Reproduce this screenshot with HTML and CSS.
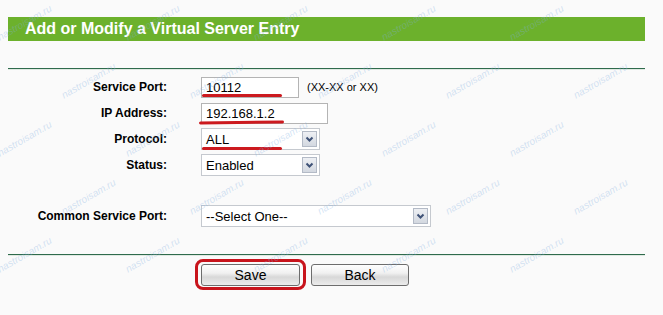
FILE: index.html
```html
<!DOCTYPE html>
<html lang="en">
<head>
    <meta charset="UTF-8">
    <meta name="viewport" content="width=device-width, initial-scale=1.0">
    <title>Virtual Server Entry</title>
    <link rel="stylesheet" href="styles.css">
</head>
<body>
    <div class="page">
        <div class="frame">
            <div class="title">Add or Modify a Virtual Server Entry</div>
            <div class="rule"></div>

            <div class="form">
                <div class="row">
                    <label class="label">Service Port:</label>
                    <input class="text port" type="text" value="10112">
                    <span class="hint">(XX-XX or XX)</span>
                </div>
                <div class="row">
                    <label class="label">IP Address:</label>
                    <input class="text ip" type="text" value="192.168.1.2">
                </div>
                <div class="row">
                    <label class="label">Protocol:</label>
                    <div class="select small">
                        <span class="value">ALL</span>
                        <span class="arrow"><svg width="13" height="14" viewBox="0 0 13 14"><path d="M3.5 5.5 L6.5 8.5 L9.5 5.5" fill="none" stroke="#3f5277" stroke-width="2"/></svg></span>
                    </div>
                </div>
                <div class="row">
                    <label class="label">Status:</label>
                    <div class="select small">
                        <span class="value">Enabled</span>
                        <span class="arrow"><svg width="13" height="14" viewBox="0 0 13 14"><path d="M3.5 5.5 L6.5 8.5 L9.5 5.5" fill="none" stroke="#3f5277" stroke-width="2"/></svg></span>
                    </div>
                </div>
                <div class="row common">
                    <label class="label">Common Service Port:</label>
                    <div class="select wide">
                        <span class="value">--Select One--</span>
                        <span class="arrow"><svg width="13" height="14" viewBox="0 0 13 14"><path d="M3.5 5.5 L6.5 8.5 L9.5 5.5" fill="none" stroke="#3f5277" stroke-width="2"/></svg></span>
                    </div>
                </div>
            </div>

            <div class="rule bottom"></div>
            <div class="buttons">
                <button class="btn">Save</button>
                <button class="btn back">Back</button>
            </div>
        </div>

        <!-- red marks drawn over the screenshot -->
        <span class="mark m1"></span>
        <span class="mark m2"></span>
        <span class="mark m3"></span>
        <span class="ring"></span>

        <div class="watermarks" id="watermarks"></div>
    </div>

    <script>
        // watermark grid
        const wm = document.getElementById('watermarks');
        for (let i = 0; i < 25; i++) {
            const s = document.createElement('span');
            s.textContent = 'nastroisam.ru';
            wm.appendChild(s);
        }
    </script>
</body>
</html>
```

FILE: styles.css
```css
body {
    margin: 0;
    padding: 0;
    background-color: #fafafa;
    font-family: 'Liberation Sans', Arial, sans-serif;
    color: #000;
}
.page {
    position: relative;
    width: 663px;
    height: 315px;
    overflow: hidden;
}
.frame {
    margin-left: 8px;
    padding-top: 17px;
    width: 637px;
}
.title {
    height: 24px;
    line-height: 24px;
    padding-left: 17px;
    background-color: #6cb12c;
    color: #fff;
    font-size: 16px;
    font-weight: bold;
}
.rule {
    margin-top: 27px;
    height: 1px;
    background-color: #2f6b4c;
    border-bottom: 1px solid #dfe9e2;
}
.rule.bottom {
    margin-top: 27px;
}
.form {
    margin-top: 4px;
}
.row {
    display: flex;
    align-items: center;
    height: 26px;
}
.row.common {
    margin-top: 27px;
    height: 22px;
}
.label {
    width: 159px;
    margin-right: 34px;
    text-align: right;
    font-size: 12px;
    font-weight: bold;
}
.text {
    box-sizing: border-box;
    height: 21px;
    margin: 0;
    padding: 0 4px;
    border: 1px solid #b4b4b4;
    background-color: #fff;
    font-family: 'Liberation Sans', Arial, sans-serif;
    font-size: 13px;
    color: #000;
    outline: none;
}
.text.port {
    width: 98px;
}
.text.ip {
    width: 127px;
}
.hint {
    margin-left: 8px;
    font-size: 11px;
}
.select {
    box-sizing: border-box;
    display: flex;
    align-items: center;
    height: 22px;
    border: 1px solid #c5c9cf;
    background-color: #fff;
    font-size: 13px;
}
.select.small {
    width: 119px;
}
.select.wide {
    width: 230px;
}
.select .value {
    flex: 1;
    padding-left: 4px;
}
.select .arrow {
    box-sizing: border-box;
    display: flex;
    width: 15px;
    height: 16px;
    margin-right: 2px;
    border: 1px solid #b3bac6;
    background: linear-gradient(#eef0f4, #d3d8e0);
}
.buttons {
    display: flex;
    gap: 11px;
    margin-top: 8px;
    padding-left: 193px;
}
.btn {
    box-sizing: border-box;
    width: 99px;
    height: 22px;
    padding: 0;
    border: 1px solid #6d6d6d;
    border-radius: 3px;
    background: linear-gradient(#fefefe, #f1f1f1 40%, #d8d8d8 60%, #ececec);
    font-family: 'Liberation Sans', Arial, sans-serif;
    font-size: 14px;
    color: #000;
}
.btn.back {
    width: 98px;
}
.mark {
    position: absolute;
    height: 3px;
    border-radius: 2px;
    background-color: #cc1a1f;
}
.m1 {
    left: 202px;
    top: 94px;
    width: 80px;
}
.m2 {
    left: 199px;
    top: 121px;
    width: 85px;
    transform: rotate(-0.6deg);
}
.m3 {
    left: 202px;
    top: 147px;
    width: 80px;
}
.ring {
    position: absolute;
    left: 195px;
    top: 259px;
    width: 105px;
    height: 25px;
    border: 3px solid #c8141c;
    border-radius: 8px;
}
.watermarks {
    position: absolute;
    left: 6px;
    top: 14px;
    width: 650px;
    display: grid;
    grid-template-columns: repeat(5, 128px);
    grid-auto-rows: 58px;
    pointer-events: none;
}
.watermarks span {
    justify-self: start;
    transform: rotate(-30deg);
    color: rgba(130, 175, 225, 0.35);
    font-family: 'Liberation Sans', Arial, sans-serif;
    font-size: 10px;
    font-style: italic;
    white-space: nowrap;
}
.watermarks span:nth-child(10n + 6),
.watermarks span:nth-child(10n + 7),
.watermarks span:nth-child(10n + 8),
.watermarks span:nth-child(10n + 9),
.watermarks span:nth-child(10n + 10) {
    margin-left: 64px;
}
```
